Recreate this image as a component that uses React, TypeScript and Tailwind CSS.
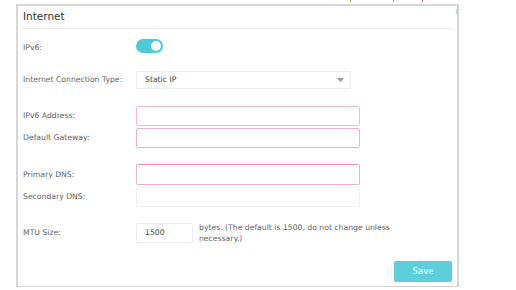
import React from "react";

const font = { fontFamily: '"DejaVu Sans", sans-serif' };

function Label({ children }: { children: React.ReactNode }) {
  return <div className="w-[113px] shrink-0 text-[7.7px] text-[#5f5f5f]">{children}</div>;
}

export default function App() {
  return (
    <div className="w-[516px] h-[290px] bg-white relative overflow-hidden" style={font}>
      <div className="absolute left-[350px] top-0 w-px h-[2px] bg-[#e0a050]" />
      <div className="absolute left-[393px] top-0 w-px h-[2px] bg-[#60a8e0]" />
      <div className="absolute left-[422px] top-0 w-px h-[2px] bg-[#e07060]" />
      <div className="ml-[16px] mt-[4px] w-[443px] h-[283px] border-2 border-[#d6d6d6] border-b relative">
        <div className="absolute right-[-1px] top-[3px] w-[2px] h-[5px] bg-[#a8dde6]" />
        <div className="h-[22px] flex items-center pl-[5px] text-[10.5px] text-[#333]">Internet</div>
        <div className="ml-[4px] mr-[5px] h-px bg-[#ebebeb]" />
        <div className="pl-[5px]">
          <div className="mt-[10px] flex items-center h-[14px]">
            <Label><span className="relative top-[2px]">IPv6:</span></Label>
            <div className="w-[27px] h-[14px] rounded-full bg-[#4ccbd6] flex items-center justify-end pr-[2px]">
              <div className="w-[10px] h-[10px] rounded-full bg-white" />
            </div>
          </div>
          <div className="mt-[18px] flex items-center h-[18px]">
            <Label>Internet Connection Type:</Label>
            <div className="w-[215px] h-[18px] border border-[#ececec] rounded-[2px] flex items-center justify-between pl-[8px] pr-[6px]">
              <span className="text-[7.7px] text-[#444]">Static IP</span>
              <svg width="7" height="4" viewBox="0 0 7 4"><path d="M0 0h7L3.5 4z" fill="#9a9a9a" /></svg>
            </div>
          </div>
          <div className="mt-[17px] flex items-center h-[20px]">
            <Label>IPv6 Address:</Label>
            <div className="w-[224px] h-[20px] border border-[#f2b9cf] rounded-[2px]" />
          </div>
          <div className="mt-[2px] flex items-center h-[20px]">
            <Label>Default Gateway:</Label>
            <div className="w-[224px] h-[20px] border border-[#f0b0c9] rounded-[2px]" />
          </div>
          <div className="mt-[16px] flex items-center h-[21px]">
            <Label>Primary DNS:</Label>
            <div className="w-[224px] h-[21px] border border-[#f0b0c9] border-t-[#ea92b5] rounded-[2px]" />
          </div>
          <div className="mt-[2px] flex items-center h-[20px]">
            <Label>Secondary DNS:</Label>
            <div className="w-[224px] h-[20px] border border-[#f0f0f0] rounded-[2px]" />
          </div>
          <div className="mt-[16px] flex items-center h-[20px]">
            <Label>MTU Size:</Label>
            <div className="w-[57px] h-[20px] border border-[#ececec] rounded-[2px] flex items-center pl-[8px] text-[7.7px] text-[#444]">1500</div>
            <div className="ml-[6px] text-[7.7px] leading-[11px] text-[#5f5f5f] w-[200px]">
              bytes. (The default is 1500, do not change unless necessary.)
            </div>
          </div>
          <div className="mt-[18px] flex justify-end pr-[5px]">
            <div className="w-[58px] h-[21px] rounded-[2px] bg-[#5ccfdb] flex items-center justify-center text-white text-[8.5px]">Save</div>
          </div>
        </div>
      </div>
    </div>
  );
}
